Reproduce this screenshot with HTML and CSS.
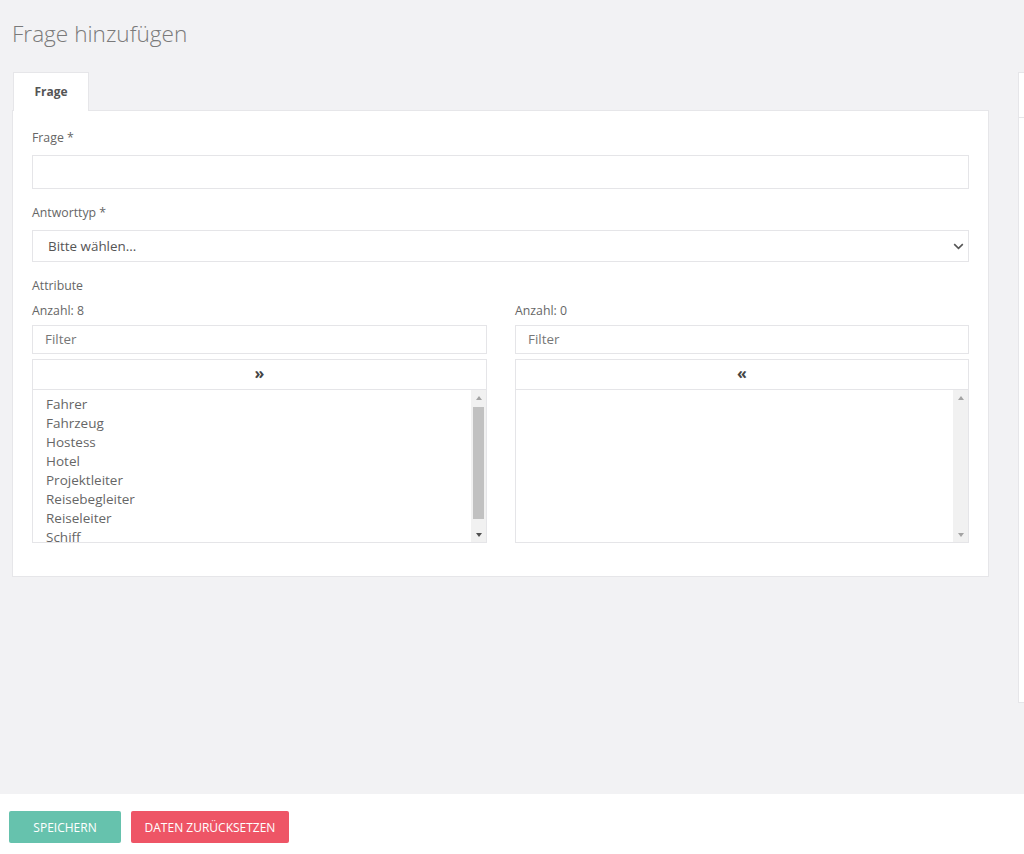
FILE: index.html
```html
<!DOCTYPE html>
<html lang="de">
<head>
<meta charset="utf-8">
<title>Frage hinzufügen</title>
<link rel="stylesheet" href="styles.css">
</head>
<body>
<div class="page">
  <main class="main">
    <h1 class="title">Frage hinzufügen</h1>
    <div class="row">
      <section class="content">
        <div class="tabs"><div class="tab">Frage</div></div>
        <div class="card">
          <label class="label">Frage *</label>
          <div class="input"></div>
          <label class="label gap">Antworttyp *</label>
          <div class="select">
            <span>Bitte wählen...</span>
            <svg class="chev" width="11" height="7" viewBox="0 0 11 7"><path d="M1.2 1.2 L5.5 5.3 L9.8 1.2" fill="none" stroke="#555" stroke-width="1.6"/></svg>
          </div>
          <div class="label gap">Attribute</div>
          <div class="dual">
            <div class="col">
              <div class="count">Anzahl: 8</div>
              <div class="filter">Filter</div>
              <div class="move">&raquo;</div>
              <div class="list">
                <ul class="items">
                  <li>Fahrer</li>
                  <li>Fahrzeug</li>
                  <li>Hostess</li>
                  <li>Hotel</li>
                  <li>Projektleiter</li>
                  <li>Reisebegleiter</li>
                  <li>Reiseleiter</li>
                  <li>Schiff</li>
                </ul>
                <div class="sb">
                  <div class="arr up"></div>
                  <div class="track"><div class="thumb"></div></div>
                  <div class="arr down"></div>
                </div>
              </div>
            </div>
            <div class="col">
              <div class="count">Anzahl: 0</div>
              <div class="filter">Filter</div>
              <div class="move">&laquo;</div>
              <div class="list">
                <ul class="items"></ul>
                <div class="sb disabled">
                  <div class="arr up"></div>
                  <div class="track"></div>
                  <div class="arr down"></div>
                </div>
              </div>
            </div>
          </div>
        </div>
      </section>
      <aside class="side">
        <div class="side-head"></div>
      </aside>
    </div>
  </main>
  <footer class="footer">
    <button class="btn save">SPEICHERN</button>
    <button class="btn reset">DATEN ZURÜCKSETZEN</button>
  </footer>
</div>
</body>
</html>
```

FILE: styles.css
```css
* { box-sizing: border-box; }
html, body { margin: 0; padding: 0; }
body {
  width: 1024px;
  height: 854px;
  overflow: hidden;
  background: #f2f2f4;
  font-family: "Open Sans", "Noto Sans", sans-serif;
  color: #666;
}
.page { display: flex; flex-direction: column; height: 854px; }
.main { height: 794px; padding: 0 0 0 12px; overflow: hidden; }
.title {
  margin: 0;
  padding-top: 20px;
  height: 72px;
  font-size: 22.6px;
  line-height: 28px;
  font-weight: 300;
  color: #7a7a7a;
}
.row { display: flex; align-items: flex-start; }
.content { width: 977px; flex: none; }
.tabs { display: flex; height: 38px; padding-left: 1px; }
.tab {
  width: 76px;
  height: 39px;
  background: #fff;
  border: 1px solid #e6e6e9;
  border-bottom: none;
  font-size: 12px;
  font-weight: 700;
  color: #555;
  text-align: center;
  line-height: 37px;
  position: relative;
  z-index: 1;
}
.card {
  background: #fff;
  border: 1px solid #e6e6e9;
  padding: 18px 19px 34px;
  height: 467px;
}
.label { display: block; font-size: 12.3px; line-height: 18px; color: #666; margin-bottom: 8px; }
.label.gap { margin-top: 15px; }
.input {
  height: 34px;
  border: 1px solid #e5e5e8;
}
.select {
  height: 32px;
  border: 1px solid #e5e5e8;
  display: flex;
  align-items: center;
  justify-content: space-between;
  padding: 0 4px 0 15px;
  font-size: 13.4px;
  color: #555;
  margin-top: 1px;
}
.dual { display: flex; gap: 28px; margin-top: -1px; }
.col { flex: 1; }
.col:first-child { flex: 0 0 455px; }
.count { font-size: 12.3px; line-height: 18px; color: #666; margin-bottom: 5px; }
.filter {
  height: 29px;
  border: 1px solid #e5e5e8;
  font-size: 13.4px;
  line-height: 27px;
  padding-left: 12px;
  color: #777;
}
.move {
  margin-top: 5px;
  height: 31px;
  border: 1px solid #e5e5e8;
  text-align: center;
  font-size: 16px;
  font-weight: 700;
  line-height: 27px;
  color: #444;
}
.list {
  height: 154px;
  margin-top: -1px;
  border: 1px solid #e5e5e8;
  display: flex;
  overflow: hidden;
}
.items {
  flex: 1;
  margin: 0;
  padding: 5px 0 0 13px;
  list-style: none;
  font-size: 13.5px;
  line-height: 19px;
  color: #666;
}
.sb {
  width: 15px;
  flex: none;
  background: #f1f1f1;
  display: flex;
  flex-direction: column;
  align-items: center;
}
.arr { height: 15px; width: 15px; display: flex; align-items: center; justify-content: center; }
.arr::before { content: ""; width: 0; height: 0; border-left: 3.5px solid transparent; border-right: 3.5px solid transparent; }
.arr.up::before { border-bottom: 4px solid #a3a3a3; }
.arr.down::before { border-top: 4px solid #505050; }
.sb.disabled .arr.down::before { border-top-color: #a3a3a3; }
.track { flex: 1; width: 100%; padding: 2px 2px; }
.thumb { height: 112px; background: #c1c1c1; }
.side {
  margin-left: 29px;
  width: 100px;
  height: 631px;
  background: #fff;
  border: 1px solid #e6e6e9;
  flex: none;
}
.side-head { height: 45px; border-bottom: 1px solid #e6e6e9; }
.footer {
  height: 60px;
  background: #fff;
  display: flex;
  gap: 10px;
  padding: 17px 9px;
}
.btn {
  height: 32px;
  border: none;
  border-radius: 2px;
  color: #fff;
  font-family: "Open Sans", "Noto Sans", sans-serif;
  font-size: 12px;
  padding: 0;
}
.save { width: 112px; background: #66c2ad; }
.reset { width: 158px; background: #ee5566; }
```
